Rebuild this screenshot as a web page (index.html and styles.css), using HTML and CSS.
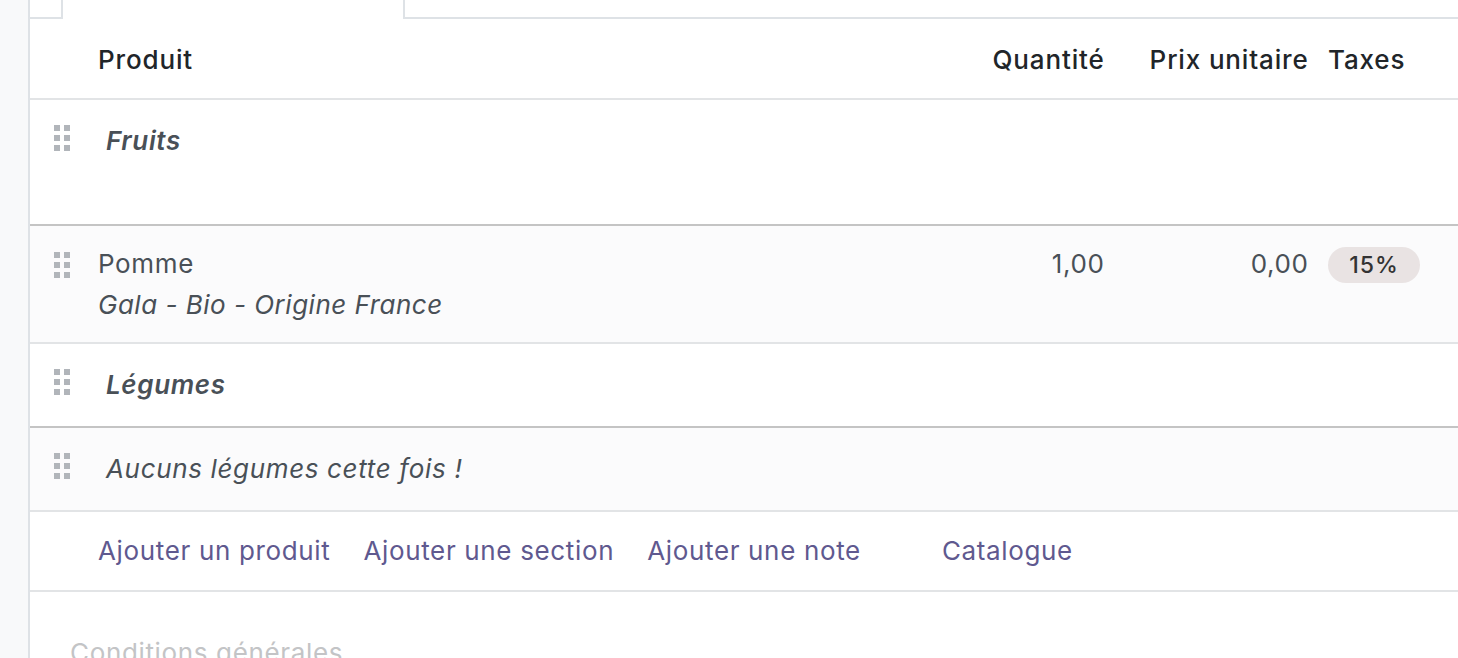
FILE: index.html
```html
<!DOCTYPE html>
<html lang="fr">
<head>
<meta charset="utf-8">
<title>Lignes de commande</title>
<link rel="stylesheet" href="styles.css">
</head>
<body>
<div class="page">
  <aside class="side"></aside>
  <main class="main">
    <nav class="tabs">
      <div class="tab-pad"></div>
      <div class="tab-active"></div>
      <div class="tab-rest"></div>
    </nav>
    <div class="table">
      <div class="row row-head">
        <div class="cell"></div>
        <div class="cell">Produit</div>
        <div class="cell num">Quantité</div>
        <div class="cell num">Prix unitaire</div>
        <div class="cell tax">Taxes</div>
      </div>

      <div class="row row-section row-tall row-strong">
        <div class="cell handle-cell">
          <svg class="handle" width="16" height="26" viewBox="0 0 16 26"><rect x="0" y="0" width="6" height="6"/><rect x="10" y="0" width="6" height="6"/><rect x="0" y="10" width="6" height="6"/><rect x="10" y="10" width="6" height="6"/><rect x="0" y="20" width="6" height="6"/><rect x="10" y="20" width="6" height="6"/></svg>
        </div>
        <div class="cell span section-name">Fruits</div>
      </div>

      <div class="row row-product row-shade">
        <div class="cell handle-cell">
          <svg class="handle" width="16" height="26" viewBox="0 0 16 26"><rect x="0" y="0" width="6" height="6"/><rect x="10" y="0" width="6" height="6"/><rect x="0" y="10" width="6" height="6"/><rect x="10" y="10" width="6" height="6"/><rect x="0" y="20" width="6" height="6"/><rect x="10" y="20" width="6" height="6"/></svg>
        </div>
        <div class="cell">
          <div class="prod-name">Pomme</div>
          <div class="prod-desc">Gala - Bio - Origine France</div>
        </div>
        <div class="cell num">1,00</div>
        <div class="cell num">0,00</div>
        <div class="cell tax"><span class="badge">15%</span></div>
      </div>

      <div class="row row-section row-strong">
        <div class="cell handle-cell">
          <svg class="handle" width="16" height="26" viewBox="0 0 16 26"><rect x="0" y="0" width="6" height="6"/><rect x="10" y="0" width="6" height="6"/><rect x="0" y="10" width="6" height="6"/><rect x="10" y="10" width="6" height="6"/><rect x="0" y="20" width="6" height="6"/><rect x="10" y="20" width="6" height="6"/></svg>
        </div>
        <div class="cell span section-name">Légumes</div>
      </div>

      <div class="row row-note row-shade">
        <div class="cell handle-cell">
          <svg class="handle" width="16" height="26" viewBox="0 0 16 26"><rect x="0" y="0" width="6" height="6"/><rect x="10" y="0" width="6" height="6"/><rect x="0" y="10" width="6" height="6"/><rect x="10" y="10" width="6" height="6"/><rect x="0" y="20" width="6" height="6"/><rect x="10" y="20" width="6" height="6"/></svg>
        </div>
        <div class="cell span note-text">Aucuns légumes cette fois !</div>
      </div>

      <div class="row row-links">
        <div class="cell"></div>
        <div class="cell span links">
          <a class="link">Ajouter un produit</a>
          <a class="link">Ajouter une section</a>
          <a class="link">Ajouter une note</a>
          <a class="link link-catalog">Catalogue</a>
        </div>
      </div>
    </div>
    <div class="terms">Conditions générales</div>
  </main>
</div>
</body>
</html>
```

FILE: styles.css
```css
* { box-sizing: border-box; }
html, body { margin: 0; padding: 0; }
body {
  font-family: Inter, "Noto Sans", sans-serif;
  font-size: 26px;
  letter-spacing: 0.65px;
  color: #495057;
  background: #fff;
  overflow: hidden;
}
.page {
  display: flex;
  height: 658px;
}
.side {
  width: 30px;
  flex: none;
  background: #f8f9fa;
  border-right: 2px solid #dee2e6;
}
.main {
  flex: 1;
  min-width: 0;
}
.tabs {
  display: flex;
  height: 19px;
}
.tab-pad {
  width: 33px;
  border-bottom: 2px solid #dee2e6;
  border-right: 2px solid #dee2e6;
}
.tab-active {
  width: 340px;
}
.tab-rest {
  flex: 1;
  border-bottom: 2px solid #dee2e6;
  border-left: 2px solid #dee2e6;
}
.table {
  display: flex;
  flex-direction: column;
}
.row {
  display: grid;
  grid-template-columns: 68px 1fr 200px 204px 150px;
  border-bottom: 2px solid #e2e4e6;
  line-height: 40px;
}
.row-strong { border-bottom-color: #c4c4c4; }
.row-shade { background: #fbfbfc; }
.cell {
  padding-top: 21px;
  padding-bottom: 21px;
  white-space: nowrap;
}
.span { grid-column: 2 / 6; }
.num { text-align: right; margin-right: -0.65px; }
.tax { padding-left: 20px; }
.row-head .cell {
  padding-top: 21px;
  padding-bottom: 18px;
  color: #212529;
  font-weight: 500;
  letter-spacing: 0.85px;
}
.handle-cell {
  padding: 25px 0 0 24px;
  line-height: 0;
}
.handle { fill: #b1b5ba; display: block; }
.row-tall .span { padding-bottom: 63px; }
.section-name {
  padding-left: 8px;
  font-style: italic;
  font-weight: 600;
  color: #495057;
}
.note-text {
  padding-left: 8px;
  font-style: italic;
}
.row-product .cell {
  padding-top: 18px;
  padding-bottom: 16px;
}
.row-product .handle-cell { padding-top: 26px; padding-bottom: 0; }
.prod-desc {
  font-style: italic;
  line-height: 42px;
  letter-spacing: 0.5px;
}
.badge {
  display: inline-block;
  width: 92px;
  height: 36px;
  margin-top: 3px;
  line-height: 36px;
  text-align: center;
  border-radius: 18px;
  background: #e9e3e3;
  color: #333;
  font-size: 23px;
  font-weight: 500;
  letter-spacing: 1px;
  vertical-align: top;
}
.row-links .cell {
  padding-top: 19px;
  padding-bottom: 19px;
}
.links {
  display: flex;
  gap: 33px;
}
.link {
  color: #5f598f;
  cursor: pointer;
}
.link-catalog { margin-left: 48px; }
.terms {
  padding: 41px 0 0 40px;
  line-height: 40px;
  color: #c3c4c6;
}
```
